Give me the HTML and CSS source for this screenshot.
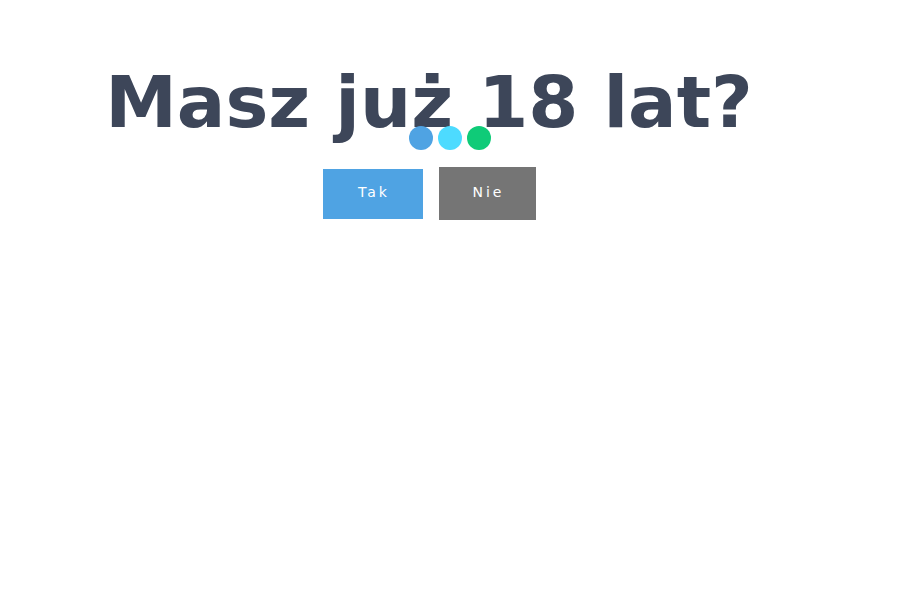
FILE: index.html
```html
<!DOCTYPE html>
<html lang="pl">
<head>
<meta charset="utf-8">
<title>Weryfikacja wieku</title>
<link rel="stylesheet" href="styles.css">
</head>
<body>
<main class="gate">
  <h1 class="title">Masz już 18 lat?</h1>
  <div class="dots">
    <span class="dot dot-blue"></span>
    <span class="dot dot-cyan"></span>
    <span class="dot dot-green"></span>
  </div>
  <div class="actions">
    <button class="btn btn-yes">Tak</button>
    <button class="btn btn-no">Nie</button>
  </div>
</main>
</body>
</html>
```
FILE: styles.css
```css
html, body {
  margin: 0;
  padding: 0;
  background: #ffffff;
}
body {
  font-family: "DejaVu Sans", sans-serif;
}
.gate {
  display: flex;
  flex-direction: column;
  align-items: center;
  padding-top: 60px;
}
.title {
  margin: 0 42px 0 0;
  font-size: 72px;
  font-weight: bold;
  line-height: 84px;
  color: #3d4659;
}
.dots {
  display: flex;
  gap: 5px;
  margin-top: -18px;
}
.dot {
  width: 24px;
  height: 24px;
  border-radius: 50%;
}
.dot-blue { background: #4fa3e3; }
.dot-cyan { background: #4ddbff; }
.dot-green { background: #0fcb78; }
.actions {
  display: flex;
  align-items: center;
  gap: 16px;
  margin: 17px 42px 0 0;
}
.btn {
  border: none;
  font-family: "DejaVu Sans", sans-serif;
  font-size: 14px;
  letter-spacing: 3px;
  text-indent: 3px;
  color: #ffffff;
  padding: 0 0 3px 0;
}
.btn-yes {
  width: 100px;
  height: 50px;
  background: #4fa3e3;
}
.btn-no {
  width: 97px;
  height: 53px;
  background: #757575;
}
```
